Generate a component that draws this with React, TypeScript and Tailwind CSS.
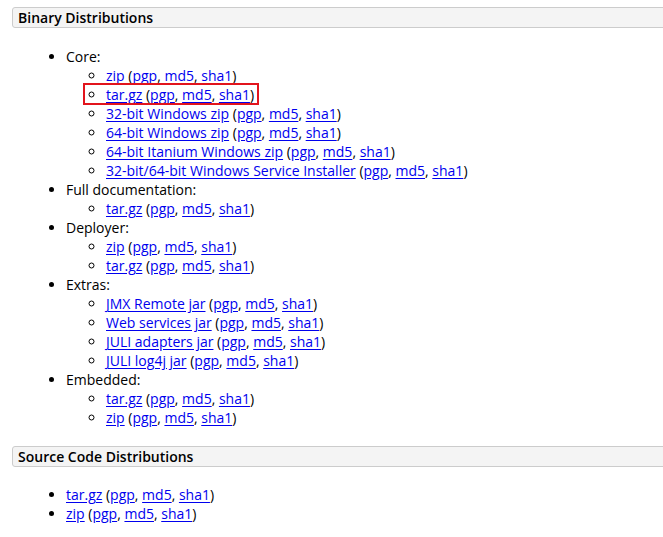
import React from 'react';

type Item = { label: string; highlight?: boolean };
type Group = { title: string; items: Item[] };

const core: Group[] = [
    {
        title: 'Core:',
        items: [
            { label: 'zip' },
            { label: 'tar.gz', highlight: true },
            { label: '32-bit Windows zip' },
            { label: '64-bit Windows zip' },
            { label: '64-bit Itanium Windows zip' },
            { label: '32-bit/64-bit Windows Service Installer' },
        ],
    },
    { title: 'Full documentation:', items: [{ label: 'tar.gz' }] },
    { title: 'Deployer:', items: [{ label: 'zip' }, { label: 'tar.gz' }] },
    {
        title: 'Extras:',
        items: [
            { label: 'JMX Remote jar' },
            { label: 'Web services jar' },
            { label: 'JULI adapters jar' },
            { label: 'JULI log4j jar' },
        ],
    },
    { title: 'Embedded:', items: [{ label: 'tar.gz' }, { label: 'zip' }] },
];

const A: React.FC<{ children: React.ReactNode }> = ({ children }) => (
    <a href="#" className="text-[#0000ee] underline underline-offset-[2px]">
        {children}
    </a>
);

const Download: React.FC<{ label: string }> = ({ label }) => (
    <>
        <A>{label}</A> (<A>pgp</A>, <A>md5</A>, <A>sha1</A>)
    </>
);

const SectionHeader: React.FC<{ title: string }> = ({ title }) => (
    <div className="ml-3 w-[680px] rounded-l-[3px] border border-[#cccccc] bg-[#f4f4f4] px-[5px] font-semibold leading-[19px]">
        {title}
    </div>
);

export default function App() {
    return (
        <div
            className="w-[663px] h-[537px] overflow-hidden bg-white pt-[7px] text-[14px] leading-[19px] text-black"
            style={{ fontFamily: '"Open Sans", "Liberation Sans", sans-serif' }}
        >
            <SectionHeader title="Binary Distributions" />

            {/* Binary list */}
            <ul className="mt-[19px] list-disc pl-[66px]">
                {core.map((g) => (
                    <li key={g.title}>
                        {g.title}
                        <ul className="list-[circle] pl-[40px]">
                            {g.items.map((it, i) => (
                                <li key={i} className={it.highlight ? 'relative' : ''}>
                                    <Download label={it.label} />
                                    {it.highlight && (
                                        <span className="pointer-events-none absolute left-[-23px] top-[-2px] h-[22px] w-[176px] border-2 border-[#e2141c]" />
                                    )}
                                </li>
                            ))}
                        </ul>
                    </li>
                ))}
            </ul>

            <div className="mt-[19px]">
                <SectionHeader title="Source Code Distributions" />
            </div>

            {/* Source list */}
            <ul className="mt-[18px] list-disc pl-[66px]">
                <li>
                    <Download label="tar.gz" />
                </li>
                <li>
                    <Download label="zip" />
                </li>
            </ul>
        </div>
    );
}
